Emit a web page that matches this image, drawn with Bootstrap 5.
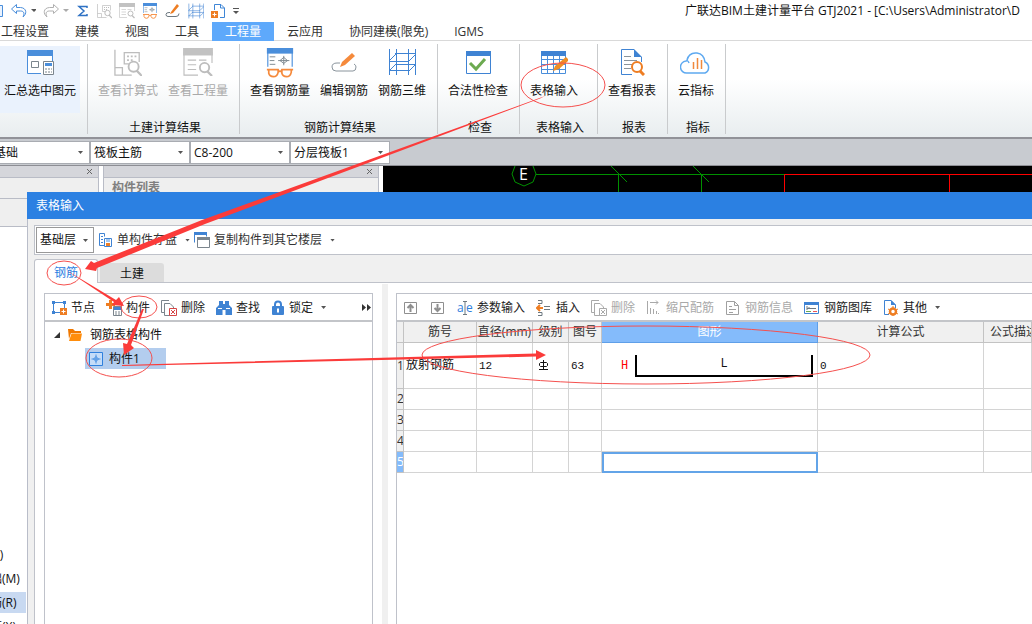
<!DOCTYPE html>
<html lang="zh-CN">
<head>
<meta charset="utf-8">
<meta name="viewport" content="width=device-width, initial-scale=1">
<title>广联达BIM土建计量平台 GTJ2021</title>
<link href="https://cdn.jsdelivr.net/npm/bootstrap@5.3.0/dist/css/bootstrap.min.css" rel="stylesheet">
<script src="https://cdn.jsdelivr.net/npm/bootstrap@5.3.0/dist/js/bootstrap.bundle.min.js"></script>
<style>
  body { font: 12px/20px "Open Sans", "Noto Sans CJK SC", sans-serif; color: #111; background: #fff; }
  button { font: inherit; color: inherit; border: 0; background: none; padding: 0; white-space: nowrap; }
  button:disabled { color: #a9a9a9; }
  svg { display: block; flex: none; }
  .caret { flex: none; width: 5px; height: 3px; background: #555; clip-path: polygon(0 0, 100% 0, 50% 100%); }

  /* title and menus */
  .title-row { height: 21px; }
  .quick { gap: 7px; padding-top: 1px; }
  .app-title { width: 347px; margin-top: 1px; }
  .menu-row { height: 20px; padding-top: 1px; border-bottom: 1px solid #d9d9d9; }
  .menu-row a { height: 19px; padding: 0 13px; line-height: 20px; color: #333; text-decoration: none; white-space: nowrap; }
  .menu-row a:first-child { padding-left: 1px; }
  .menu-row a.active { background: #5ea9fb; color: #fff; }

  /* ribbon */
  .ribbon { height: 96px; background: linear-gradient(#fff 40%, #e8edef); }
  .rgroup { flex: none; padding: 5px 6px 0 5px; position: relative; margin: 0 1px 0 0; }
  .rgroup::after { content: ""; position: absolute; right: -1px; top: 3px; bottom: 3px; width: 1px; background: #c9cbcd; }
  .rgroup-first { width: 87px; padding-left: 0; }
  .rgroup-first .rbtn { width: 80px; background: #eaf2fd; }
  .rgroup-wide { width: 77px; }
  .rbtn { height: 67px; padding: 2px 5px 0; display: flex; flex-direction: column; align-items: center; gap: 5px; }
  .rbtn-tall { gap: 3px; }
  .rlabel { margin-top: 5px; padding-left: 4px; text-align: center; }

  /* property drop-downs */
  .propbar { height: 29px; padding: 2px 0; background: #c8cbd0; border-top: 2px solid #919298; border-bottom: 1px solid #8d8e94; }
  .pick { appearance: none; border: 1px solid #a9acb2; border-radius: 0; color: #111; padding: 0 14px 0 3px;
    background: #fff url("data:image/svg+xml,%3Csvg xmlns='http://www.w3.org/2000/svg' width='5' height='3'%3E%3Cpath d='M0 0h5L2.500 3z' fill='%23555'/%3E%3C/svg%3E") no-repeat right 6px center; }
  .propbar .pick { width: 100px; height: 23px; }
  .propbar .pick:first-child { margin-left: -10px; }

  /* docked panels */
  .work { background: #fff; }
  .dock { flex: none; background: #efefef; border-right: 1px solid #b9bcc6; }
  .dock-head { height: 12px; align-items: center; background: #d5d6db; border-bottom: 1px solid #b9bcc6; padding-right: 5px; }
  .dock-a { width: 99px; }
  .dock-b { width: 276px; border-left: 1px solid #b9bcc6; margin: 0 4px; }
  .dock-strip { height: 21px; border-bottom: 1px solid #b9bcc6; background: #efefef; }
  .dock-tools { height: 28px; border-bottom: 1px solid #b9bcc6; background: #efefef; }
  .dock-title { font-weight: 700; color: #808080; padding-left: 8px; }
  .comp-list { margin-left: -50px; padding-top: 317px; width: 76px; }
  .comp-list li { height: 21px; margin-bottom: 3px; padding-left: 4px; white-space: nowrap; line-height: 21px; }
  .comp-list .sel { background: #c8d9f1; }
  .cad { background: #000; min-width: 0; }

  /* dialog window */
  .dlg { position: absolute; left: 27px; top: 26px; right: 0; bottom: 0; background: #f0f0f0; border-left: 1px solid #b9bdc9; }
  .dlg-title { height: 27px; line-height: 27px; background: #2b80e2; color: #fff; padding-left: 9px; margin-left: -1px; }
  .dlg-tools { height: 30px; margin: 6px 0 0 6px; padding: 1px; border: 1px solid #bfc2ca; border-right: 0; background: #fff; color: #333; }
  .dlg-tools .pick { width: 58px; height: 26px; border-color: #999; padding-left: 3px; background-position: right 5px center; }
  .dlg-tools button { gap: 4px; margin-left: 4px; line-height: 22px; }
  .dlg-tools .caret { margin-left: 4px; }
  .dlg-tabs { height: 28px; margin-left: 6px; padding-top: 4px; }
  .dlg-tabs button { width: 64px; padding-top: 2px; }
  .dlg-tabs .on { background: #fff; border: 1px solid #bfc2ca; border-bottom: 0; border-radius: 3px 3px 0 0; color: #2b80e2; }
  .dlg-tabs .off { background: #dcdcdc; border-radius: 3px 3px 0 0; margin: 4px 0 0 2px; line-height: 18px; }
  .tab-fill { border-bottom: 1px solid #bfc2ca; }
  .dlg-body { margin-left: 6px; border-left: 1px solid #bfc2ca; background: #fff; padding: 10px 0 0 9px; }
  .pane-l { flex: none; width: 329px; border: 1px solid #bfc2ca; border-bottom: 0; }
  .splitter { flex: none; width: 6px; margin: -9px 8px 0 9px; background: #f0f0f0; }
  .pane-r { border: solid #bfc2ca; border-width: 1px 0 0 1px; min-width: 0; overflow: hidden; }
  .tbar { height: 28px; padding: 2px 1px 0; gap: 1px; color: #222; border-bottom: 2px solid #c3c5c9; }
  .tbar button { height: 23px; flex: none; display: flex; align-items: center; gap: 4px; padding: 0 5px; }
  .tbar button.more { padding: 0; }
  .tree-row { height: 26px; gap: 7px; padding-left: 9px; }
  .tree-sel { margin-left: 40px; width: 81px; height: 21px; background: #b3cdee; padding-left: 4px; gap: 6px; }
  .twisty { width: 6px; height: 6px; background: #333; clip-path: polygon(100% 0, 100% 100%, 0 100%); }

  .bars { table-layout: fixed; width: 100%; border-collapse: separate; border-spacing: 0; }
  .bars th, .bars td { padding: 0; height: 21px; line-height: 20px; border: solid #d4d4d4; border-width: 0 1px 1px 0; white-space: nowrap; overflow: hidden; font-weight: 400; }
  .bars thead th { background: #f0f0f0; text-align: center; color: #333; border-color: #c3c3c3; }
  .bars thead th.hot { background: #84bbfb; color: #fff; border-color: #5f9fe8; }
  .bars thead th.cut { text-align: left; padding-left: 6px; }
  .bars tbody th { background: #f0f0f0; color: #333; border-color: #c3c3c3; }
  .bars tbody th.hot { background: #84bbfb; color: #fff; }
  .bars tbody .tall > * { height: 46px; }
  .bars tbody td { padding-left: 2px; font-family: "Liberation Mono", "Noto Sans CJK SC", monospace; font-size: 12px; }
  .bars tbody td.figs { font-size: 11px; }
  .bars td.cursor { border: 2px solid #63a4e8; }
  .shape { margin: 0 4px 0 17px; gap: 7px; }
  .shape-h { color: #f00; }
  .bar-shape { height: 22px; line-height: 18px; border: solid #000; border-width: 0 2px 2px; text-align: center; }
  .marks { position: absolute; left: 0; top: 0; pointer-events: none; }
</style>
</head>
<body class="vh-100 d-flex flex-column overflow-hidden position-relative">

<header>
  <div class="title-row d-flex justify-content-between overflow-hidden">
    <div class="quick d-flex align-items-center">
      <svg width="3" height="16"><path d="M0 2.500h2.500v11H0" fill="#eaf2fd" stroke="#4a8edb"/></svg>
      <svg width="26" height="16" fill="none" stroke="#4a8edb"><path d="M6.500 1.500L1.500 6l5 4.500V8h4c4 0 4 3 2.500 6 4-3 4-9-2.500-9.500h-4z"/><path d="M21 6h6l-3 3z" fill="#555" stroke="none"/></svg>
      <svg width="26" height="16" fill="none" stroke="#b0b0b0"><path d="M10.500 1.500l5 4.500-5 4.500V8h-4c-4 0-4 3-2.500 6-4-3-4-9 2.500-9.500h4z"/><path d="M20 6h6l-3 3z" fill="#aaa" stroke="none"/></svg>
      <svg width="14" height="16"><path d="M11 5V3.500H3L8 8l-5 4.500h8V11" fill="none" stroke="#2f72c4" stroke-width="1.500"/></svg>
      <svg width="15" height="16"><use href="#i-formula"/></svg>
      <svg width="16" height="16"><use href="#i-report"/></svg>
      <svg width="16" height="16"><use href="#i-glasses"/></svg>
      <svg width="16" height="16"><path d="M6 9l6-8 2 2-6 7-3 1z" fill="#ee7d22"/><path d="M5 9.500H4q-3 0-3 2t2 2h8q3 0 3-3" fill="none" stroke="#6d7880"/></svg>
      <svg width="16" height="16" viewBox="0 0 28 26"><use href="#i-3d"/></svg>
      <svg width="15" height="16" fill="none"><path d="M3.500 7V1.500H10L13.500 5v9.500H9M9.500 1.500V5h4" stroke="#3f86d6"/><path d="M0 8h7v7H0z" fill="#ee7d22"/><path d="M3.500 9.500v4M1.500 11.500h4" stroke="#fff"/></svg>
      <svg width="6" height="8"><path d="M0 1.500h6" stroke="#555"/><path d="M0 4h6L3 7z" fill="#555"/></svg>
    </div>
    <div class="app-title text-nowrap overflow-hidden">广联达BIM土建计量平台 GTJ2021 - [C:\Users\Administrator\D</div>
  </div>
  <nav class="menu-row d-flex">
    <a href="#">工程设置</a><a href="#">建模</a><a href="#">视图</a><a href="#">工具</a><a href="#" class="active">工程量</a><a href="#">云应用</a><a href="#">协同建模(限免)</a><a href="#">IGMS</a>
  </nav>
</header>

<section class="ribbon d-flex">
  <div class="rgroup rgroup-first">
    <button class="rbtn"><svg width="28" height="28" fill="none"><path d="M1 2h26v24H1z" fill="#fff"/><path d="M1.500 8v17.500H15M26.500 8v5" stroke="#4a8edb" /><path d="M1 2h26v6H1z" fill="#4a8edb"/><path d="M5.500 13.500h7v6h-7z" stroke="#7b858d"/><path d="M17.500 13.500h10v13h-10z" fill="#fff" stroke="#7b858d"/><path d="M19 15h7v3h-7z" fill="#4a8edb"/><path d="M19 21h2m1 0h2m1 0h1M19 24h2m1 0h2m1 0h1" stroke="#7b858d"/></svg>汇总选中图元</button>
  </div>
  <div class="rgroup">
    <div class="d-flex">
      <button class="rbtn" disabled><svg width="28" height="28" viewBox="0 0 15 15"><use href="#i-formula"/></svg>查看计算式</button>
      <button class="rbtn" disabled><svg width="30" height="28" viewBox="0 0 16 15"><use href="#i-report"/></svg>查看工程量</button>
    </div>
    <div class="rlabel">土建计算结果</div>
  </div>
  <div class="rgroup">
    <div class="d-flex">
      <button class="rbtn rbtn-tall"><svg width="30" height="30" viewBox="0 0 16 16"><use href="#i-glasses"/></svg>查看钢筋量</button>
      <button class="rbtn"><svg width="26" height="28" fill="none"><path d="M9 15H6q-5 0-5 4t4 4h17q3 0 3-4 0-2-2-3" stroke="#8a949c"/><path d="M9 19l2-5L21 5l3 3-10 9z" fill="#f58a3c"/></svg>编辑钢筋</button>
      <button class="rbtn"><svg width="28" height="28" viewBox="0 -1 28 28"><use href="#i-3d"/></svg>钢筋三维</button>
    </div>
    <div class="rlabel">钢筋计算结果</div>
  </div>
  <div class="rgroup">
    <button class="rbtn"><svg width="26" height="28" fill="none"><path d="M1.500 3.500h24v22h-24z" stroke="#3f83d3"/><path d="M1 3h25v5H1z" fill="#3f83d3"/><path d="M5 15l6 6 9-10" stroke="#6caa50" stroke-width="3"/></svg>合法性检查</button>
    <div class="rlabel">检查</div>
  </div>
  <div class="rgroup rgroup-wide">
    <button class="rbtn"><svg width="28" height="28" fill="none"><path d="M1.500 3.500h24v22h-24zM1 11.500h24M1 16.500h24M1 21.500h24M7.500 7v18M13.500 7v18M19.500 7v18" stroke="#4a8edb"/><path d="M1 3h25v5H1z" fill="#3f83d3"/><path d="M13 23l2-5L26 9l3 3-10 9z" fill="#ee8d25"/></svg>表格输入</button>
    <div class="rlabel">表格输入</div>
  </div>
  <div class="rgroup">
    <button class="rbtn"><svg width="26" height="28" fill="none"><path d="M22.500 9v5M13 26.500H2.500v-25H15" stroke="#3f83d3"/><path d="M15 1l8 8h-8z" fill="#3f83d3"/><path d="M5 8.500h7M5 12.500h13M5 16.500h8M5 20.500h7" stroke="#8a949c"/><circle cx="18" cy="19" r="5" fill="#fff" stroke="#ee7d22" stroke-width="2"/><path d="M21 23l4 4" stroke="#ee7d22" stroke-width="3"/></svg>查看报表</button>
    <div class="rlabel">报表</div>
  </div>
  <div class="rgroup">
    <button class="rbtn"><svg width="32" height="28" fill="none"><path d="M9 25H7a6 6 0 0 1-1-12q2-1 3 2M7 12Q9 4 17 5q7 1 8 9a6 6 0 0 1 0 11H9" stroke="#5ea9f0" stroke-width="1.500"/><path d="M13.500 14v7M17.500 10v11M21.500 12v9" stroke="#f0893c" stroke-width="1.500"/></svg>云指标</button>
    <div class="rlabel">指标</div>
  </div>
</section>

<section class="propbar d-flex">
  <select class="pick" aria-label="构件类型"><option>基础</option></select>
  <select class="pick" aria-label="构件"><option>筏板主筋</option></select>
  <select class="pick" aria-label="规格"><option>C8-200</option></select>
  <select class="pick" aria-label="分层"><option>分层筏板1</option></select>
</section>

<main class="work flex-grow-1 d-flex position-relative overflow-hidden">
  <div class="dock dock-a overflow-hidden bg-white">
    <div class="dock-head d-flex justify-content-end"><button aria-label="关闭"><svg width="7" height="7" stroke="#666"><path d="M1 1l5 5M6 1L1 6"/></svg></button></div>
    <div class="dock-strip"></div>
    <div class="dock-tools"></div>
    <ul class="comp-list list-unstyled">
      <li>筏板梁(F)</li><li>筏板基础(M)</li><li class="sel">筏板主筋(R)</li><li>筏板负筋(X)</li>
    </ul>
  </div>
  <div class="dock dock-b">
    <div class="dock-head d-flex justify-content-end"><button aria-label="关闭"><svg width="7" height="7" stroke="#666"><path d="M1 1l5 5M6 1L1 6"/></svg></button></div>
    <div class="dock-title">构件列表</div>
  </div>
  <div class="cad flex-grow-1 overflow-hidden">
    <svg width="1200" height="60" fill="none" stroke="#009000"><path d="M132 0l-3 8 3 8 9 4 9-4 3-8-3-8M153 8.500h249M235.500 8v30M318.500 8v30M228 0l16 16M310 0l16 16"/><path d="M401.500 40V8.500h798M566.500 8v30" stroke="#f00"/><text x="136" y="14" fill="#fff" stroke="none" font-size="16">E</text></svg>
  </div>

  <section class="dlg d-flex flex-column">
    <div class="dlg-title">表格输入</div>
    <div class="dlg-tools d-flex align-items-center">
      <select class="pick" aria-label="楼层"><option>基础层</option></select>
      <button class="d-flex align-items-center"><svg width="15" height="16" fill="none"><path d="M6 13.500H1.500v-12h5v3M3 4.500h2M3 7.500h2M3 10.500h2" stroke="#3f83d3"/><path d="M6.500 6.500h7v8h-7z" stroke="#3f83d3" fill="#fff"/><path d="M8 7h4v3H8z" fill="#a6c8ee"/><path d="M8 11h4v3H8z" fill="#ee7d22"/></svg>单构件存盘<span class="caret"></span></button>
      <button class="d-flex align-items-center"><svg width="16" height="16" fill="none"><path d="M.5 10.500v-10h12v4" stroke="#3f83d3"/><path d="M0 0h13v3H0z" fill="#3f83d3"/><path d="M3.500 5.500h12v10h-12z" fill="#fff" stroke="#7b858d"/><path d="M3 5h13v3H3z" fill="#7b858d"/></svg>复制构件到其它楼层<span class="caret"></span></button>
    </div>
    <div class="dlg-tabs d-flex">
      <button class="on">钢筋</button>
      <div class="tab-fill d-flex flex-grow-1"><button class="off">土建</button></div>
    </div>
    <div class="dlg-body flex-grow-1 d-flex">
      <div class="pane-l">
        <div class="tbar d-flex">
          <button><svg width="16" height="16" fill="none"><path d="M3 2.500h9M2.500 3v9M13.500 4v4M4 12.500h5" stroke="#3f83d3"/><path d="M1 1h3v3H1zM12 1h3v3h-3zM1 11h3v3H1z" fill="#3f83d3"/><path d="M9 8h7v7H9z" fill="#ee7d22"/><path d="M12.500 9.500v4M10.500 11.500h4" stroke="#fff"/></svg>节点</button>
          <button><svg width="16" height="16" fill="none"><path d="M3 0h3v3h3v3H6v3H3V6H0V3h3z" fill="#ee7d22"/><path d="M7.500 6.500h8v9h-8z" fill="#fff" stroke="#7b858d"/><path d="M8 7h7v3H8z" fill="#3f83d3"/><path d="M9 12h2m1 0h2M9 14h2m1 0h2" stroke="#7b858d"/></svg>构件</button>
          <button><svg width="16" height="16"><use href="#i-del"/></svg>删除</button>
          <button><svg width="16" height="16"><path d="M3 1h4v3h2V1h4v4l3 3v7H9.500v-5h-3v5H0V8l3-3z" fill="#3f83d3"/><path d="M2 8.500h4M10 8.500h4" stroke="#fff"/></svg>查找</button>
          <button><svg width="14" height="16"><path d="M4 7V4.500q0-3 3-3t3 3V7" fill="none" stroke="#3f83d3" stroke-width="2"/><path d="M2 6h10q1 0 1 1v7q0 1-1 1H2q-1 0-1-1V7q0-1 1-1z" fill="#3f83d3"/><path d="M7 8.500v4" stroke="#fff" stroke-width="2"/></svg>锁定<span class="caret ms-1"></span></button>
          <button class="more ms-auto" aria-label="更多"><svg width="9" height="7"><path d="M0 0l4 3.500L0 7zM5 0l4 3.500L5 7z" fill="#333"/></svg></button>
        </div>
        <div class="tree-row d-flex align-items-center"><span class="twisty"></span><svg width="16" height="14"><path d="M1 1h5l2 2h6v2H4L2 11z" fill="#f07800"/><path d="M4.500 5.500H15L13.500 13H2z" fill="#ff8d0c"/></svg>钢筋表格构件</div>
        <div class="tree-sel d-flex align-items-center"><svg width="14" height="14" fill="none" stroke="#2f80dd"><path d="M.5 .5h13v13H.5z" fill="#c4dcf8"/><path d="M2.500 7h9M7 2.500v9M7 4.500L4.500 7 7 9.500M7 4.500L9.500 7 7 9.500" stroke-width=".8"/></svg>构件1</div>
      </div>
      <div class="splitter"></div>
      <div class="pane-r flex-grow-1">
        <div class="tbar d-flex">
          <button aria-label="上移"><svg width="16" height="16" fill="none" stroke="#8f8f8f"><path d="M1.500 2.500h12v11h-12z"/><path d="M7.500 12V6M4.500 8l3-3 3 3" stroke-width="2"/></svg></button>
          <button aria-label="下移"><svg width="16" height="16" fill="none" stroke="#8f8f8f"><path d="M1.500 2.500h12v11h-12z"/><path d="M7.500 4v6M4.500 8l3 3 3-3" stroke-width="2"/></svg></button>
          <button><svg width="16" height="16" fill="none"><path d="M6 1.500h4M8 1.500v13M6 14.500h4" stroke="#6d7880"/><text x="0" y="12" font-size="12" fill="#2f80dd">a</text><text x="9" y="12" font-size="12" fill="#2f80dd">e</text></svg>参数输入</button>
          <button><svg width="16" height="16" fill="none"><path d="M2 .5h4v3H2M2 15.500h4v-3H2M8 6.500h6M8 9.500h6" stroke="#6d7880"/><path d="M1 8h6M4 5L1 8l3 3" stroke="#ee7d22" stroke-width="2"/></svg>插入</button>
          <button disabled><svg width="16" height="16"><use href="#i-del-off"/></svg>删除</button>
          <button disabled><svg width="16" height="16" fill="none" stroke="#a9a9a9"><path d="M1.500 1v13M4.500 8v6M7.500 9v5M10.500 11v3M12.500 13v1M4 2.500h8M10 .5l2 2-2 2"/></svg>缩尺配筋</button>
          <button disabled><svg width="16" height="16" fill="none" stroke="#a0a0a0"><path d="M1.500 1.500h8l4 4v9h-12zM9.500 1.500v4h4M4 6.500h3M4 9.500h7M4 12.500h4"/></svg>钢筋信息</button>
          <button><svg width="16" height="16" fill="none"><path d="M.5 2.500h14v11H.5z" stroke="#3f83d3"/><path d="M0 2h15v3H0z" fill="#3f83d3"/><path d="M3 6v4M3 8.500h9M5 7v2" stroke="#6d7880"/><path d="M2 11.500h5" stroke="#6caa50"/><path d="M9 11.500h4" stroke="#e55"/></svg>钢筋图库</button>
          <button><svg width="16" height="16" fill="none"><path d="M6 14.500H1.500V.5H8L12.500 5v3" stroke="#3f83d3"/><path d="M8 0l5 5H8z" fill="#3f83d3"/><circle cx="10" cy="11.500" r="3" stroke="#ee7d22" stroke-width="2.500"/><path d="M10 6v2M10 15v1M5 9l2 1M15 9l-2 1M5 14l2-1M15 14l-2-1" stroke="#ee7d22"/></svg>其他<span class="caret ms-1"></span></button>
        </div>
        <table class="bars">
          <colgroup><col style="width:7px"><col style="width:73px"><col style="width:56px"><col style="width:36px"><col style="width:33px"><col style="width:216px"><col style="width:166px"><col></colgroup>
          <thead><tr><th></th><th>筋号</th><th>直径(mm)</th><th>级别</th><th>图号</th><th class="hot">图形</th><th>计算公式</th><th class="cut">公式描述</th></tr></thead>
          <tbody>
            <tr class="tall"><th>1</th><td>放射钢筋</td><td class="figs">12</td><td><svg class="ms-1" width="9" height="11" fill="none" stroke="#111"><path d="M4.500 0v10M1.500 2.500h6l1 1v2l-1 1h-6l-1-1v-2zM0 9.500h9"/></svg></td><td class="figs">63</td>
              <td><div class="shape d-flex align-items-center"><span class="shape-h">H</span><div class="bar-shape flex-grow-1">L</div></div></td><td class="figs">0</td><td></td></tr>
            <tr><th>2</th><td></td><td></td><td></td><td></td><td></td><td></td><td></td></tr>
            <tr><th>3</th><td></td><td></td><td></td><td></td><td></td><td></td><td></td></tr>
            <tr><th>4</th><td></td><td></td><td></td><td></td><td></td><td></td><td></td></tr>
            <tr><th class="hot">5</th><td></td><td></td><td></td><td></td><td class="cursor"></td><td></td><td></td></tr>
          </tbody>
        </table>
      </div>
    </div>
  </section>
</main>

<!-- hand-drawn guide arrows over the windows -->
<svg class="marks" width="1032" height="624" fill="none" stroke="#f5504e">
  <ellipse cx="563" cy="85" rx="42" ry="22"/>
  <ellipse cx="64" cy="273" rx="17" ry="12"/>
  <ellipse cx="139" cy="307" rx="18" ry="11"/>
  <ellipse cx="119" cy="358" rx="33" ry="19"/>
  <ellipse cx="646" cy="355" rx="224" ry="29"/>
  <g fill="#fb3b3a" stroke="none">
    <path d="M545 96L202 220 94 263l-3-2-6 8 11 2 1-3 108-44L540 98.500z"/>
    <path d="M66 270l50 30 3-3 5 9-12-1 2-3z"/>
    <path d="M144 309l-13 36 3 3-10 7-1-12 4 1 15-35z"/>
    <path d="M122 365l414-11.500V350l10 5-10 5v-3.500L122 366z"/>
  </g>
</svg>

<svg width="0" height="0" class="position-absolute" aria-hidden="true">
  <symbol id="i-formula" overflow="visible"><g fill="none" stroke="#bdbdbd" stroke-width=".7"><path d="M.5 1v13.500h9M.5 10.500h4v4"/><path d="M8 8.500H5.500v-6h8v5" /><path d="M7 4.500h5M7 6.500h3" stroke-width="1" stroke-dasharray="1 1"/><circle cx="10.500" cy="10" r="2.700" stroke-width="1"/><path d="M12 12l3 3" stroke-width="1.200"/></g></symbol>
  <symbol id="i-report" overflow="visible"><g fill="none" stroke="#bdbdbd"><path d="M.5 2v12.500H8M15.500 2v6M2.500 6.500H7M8.500 6.500h4M2.500 9H7M2.500 11.500H7" stroke-width=".6"/><path d="M0 0h16v4H0z" fill="#c2c2c2" stroke="none"/><circle cx="11.500" cy="10.500" r="2.500"/><path d="M13 12.500l2.500 2.500" stroke-width="1.200"/></g></symbol>
  <symbol id="i-glasses" overflow="visible"><g fill="none"><path d="M1.500 1v9M14.500 1v9" stroke="#4a8edb" stroke-width=".6"/><path d="M1 0h14v3H1z" fill="#4a8edb"/><path d="M2.500 4.700h3M2.500 6.700h2.500M2.500 8.700h3M7 6.700h6M10 4.200v5M10 5L8 6.700 10 8.200M10 5l2 1.700-2 1.500" stroke="#7b858d" stroke-width=".5"/><path d="M1 11.500h6l.5 1h1l.5-1h6M2 12v1.500Q2.500 15.300 4.500 15.300T7 13v-1M9 12v1.500q.5 1.800 2.500 1.800T14 13v-1" stroke="#f58a3c" stroke-width=".9"/></g></symbol>
  <symbol id="i-3d" overflow="visible"><path d="M1.500 0v26M8.500 0v26M20.500 0v26M27.500 0v26M1 12.500h20M1 21.500h20M7 4.500h20M7 15.500h20M1 12l7-7M21 12l7-7M1 22l7-7M21 22l7-7" fill="none" stroke="#3f83d3"/></symbol>
  <symbol id="i-del" overflow="visible"><g fill="none"><path d="M3 12.500H.5V.5H8" stroke="#7b858d"/><path d="M3.500 3.500H9L12.500 7v8.500h-9z" fill="#fff" stroke="#7b858d"/><path d="M8.500 8.500h7v7h-7z" fill="#fff" stroke="#d64545"/><path d="M10 10l4 4M14 10l-4 4" stroke="#d64545"/></g></symbol>
  <symbol id="i-del-off" overflow="visible"><g fill="none" stroke="#a9a9a9"><path d="M3 12.500H.5V.5H8"/><path d="M3.500 3.500H9L12.500 7v8.500h-9z" fill="#fff"/><path d="M8.500 8.500h7v7h-7z" fill="#fff"/><path d="M10 10l4 4M14 10l-4 4"/></g></symbol>
</svg>
</body>
</html>
